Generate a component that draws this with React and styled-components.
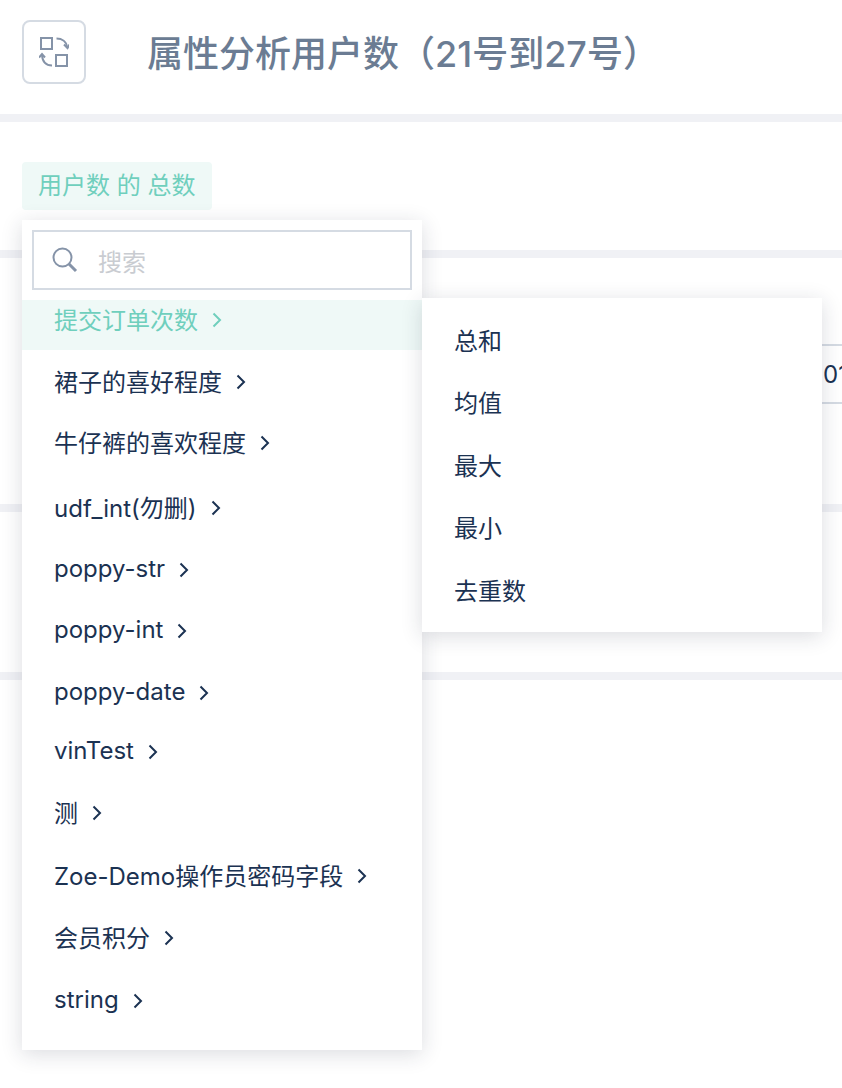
import React from "react";
import styled, { createGlobalStyle } from "styled-components";

const GlobalStyle = createGlobalStyle`
	html, body {
		margin: 0;
		padding: 0;
		background: #fff;
	}
	body {
		font-family: Inter, "Noto Sans CJK SC", sans-serif;
		overflow: hidden;
	}
	* {
		box-sizing: border-box;
	}
`;

const Page = styled.div`
	position: relative;
	width: 842px;
	height: 1088px;
	overflow: hidden;
`;
const Header = styled.header`
	display: flex;
	align-items: center;
	height: 114px;
	padding: 0 0 10px 22px;
	gap: 61px;
`;
const IconButton = styled.button`
	display: flex;
	align-items: center;
	justify-content: center;
	width: 64px;
	height: 64px;
	padding: 0;
	background: #fff;
	border: 2px solid #d5dbe3;
	border-radius: 8px;
`;
const Title = styled.h1`
	margin: 0;
	padding: 0 0 3px;
	font-size: 36px;
	font-weight: 500;
	color: #6b7c93;
	white-space: nowrap;
`;
const Section = styled.section`
	height: ${(p) => p.$height}px;
	padding: ${(p) => p.$padding || "0"};
	border-top: 8px solid #f0f1f5;
`;
const MetricTag = styled.div`
	display: inline-flex;
	align-items: center;
	height: 48px;
	padding: 0 16px 5px;
	font-size: 24px;
	color: #6fcfbd;
	background: #eff9f7;
	border-radius: 4px;
`;
const DataTable = styled.div`
	display: flex;
	align-items: center;
	height: 60px;
	margin: 86px 0 0 822px;
	padding-left: 1px;
	width: 20px;
	overflow: hidden;
	font-size: 24px;
	color: #1b3252;
	white-space: nowrap;
	border-top: 2px solid #d5dbe3;
	border-bottom: 2px solid #d5dbe3;
`;
const Menu = styled.div`
	position: absolute;
	background: #fff;
	box-shadow: 0 4px 20px rgba(30, 40, 60, 0.16);
`;
const AttributeMenu = styled(Menu)`
	left: 22px;
	top: 220px;
	width: 400px;
	height: 830px;
	padding-top: 10px;
`;
const AggregateMenu = styled(Menu)`
	left: 422px;
	top: 298px;
	width: 400px;
	height: 334px;
	padding-top: 10px;
`;
const SearchBox = styled.div`
	display: flex;
	align-items: center;
	gap: 20px;
	height: 60px;
	margin: 0 10px;
	padding: 0 18px;
	border: 2px solid #d5dbe3;
`;
const SearchPlaceholder = styled.span`
	font-size: 24px;
	color: #c9ccd1;
`;
const AttributeList = styled.ul`
	margin: 10px 0 0;
	padding: 0;
	list-style: none;
`;
const AttributeRow = styled.li`
	display: flex;
	align-items: center;
	gap: 14px;
	height: 50px;
	margin-top: ${(p) => p.$gap}px;
	padding: ${(p) => (p.$active ? "0 0 10px 32px" : "0 0 0 32px")};
	font-size: 24px;
	color: ${(p) => (p.$active ? "#6fcfbd" : "#1b3252")};
	background: ${(p) => (p.$active ? "#eff9f7" : "transparent")};
	white-space: nowrap;
`;
const RowLabel = styled.span`
	padding-bottom: 3px;
`;
const AggregateRow = styled.div`
	display: flex;
	align-items: center;
	height: 62.5px;
	padding-left: 32px;
	font-size: 24px;
	color: #1b3252;
`;

const SwapIcon = () => (
	<svg width="30" height="32" viewBox="0 0 30 32" fill="none" stroke="#8593a8" strokeWidth="2">
		<rect x="2" y="2" width="11" height="11" />
		<rect x="17" y="19" width="11" height="11" />
		<path d="M17.500 2.500C23 2.500 27.500 5.500 28 11" />
		<path d="M25 8.500l3.500 3.500 2-3.500" />
		<path d="M13 29.500C7.500 29.500 3.500 26 3 19" />
		<path d="M0 21.500l3-3.500 3 3.500" />
	</svg>
);

const SearchIcon = () => (
	<svg width="26" height="26" viewBox="0 0 26 26" fill="none" stroke="#8593a8" strokeWidth="2">
		<circle cx="10.500" cy="10.500" r="9" />
		<path d="M17 17l7 7" strokeWidth="3" />
	</svg>
);

const Chevron = ({ color }) => (
	<svg width="10" height="16" viewBox="0 0 10 16" fill="none" stroke={color} strokeWidth="2">
		<path d="M1.500 1.500L8 8l-6.500 6.500" />
	</svg>
);

const attributes = [
	{ label: "提交订单次数", gap: 0, active: true },
	{ label: "裙子的喜好程度", gap: 7 },
	{ label: "牛仔裤的喜欢程度", gap: 11 },
	{ label: "udf_int(勿删)", gap: 15 },
	{ label: "poppy-str", gap: 12 },
	{ label: "poppy-int", gap: 11 },
	{ label: "poppy-date", gap: 12 },
	{ label: "vinTest", gap: 9 },
	{ label: "测", gap: 11 },
	{ label: "Zoe-Demo操作员密码字段", gap: 13 },
	{ label: "会员积分", gap: 12 },
	{ label: "string", gap: 13 },
];

const aggregates = ["总和", "均值", "最大", "最小", "去重数"];

export default function App() {
	return (
		<Page>
			<GlobalStyle />
			<Header>
				<IconButton>
					<SwapIcon />
				</IconButton>
				<Title>属性分析用户数（21号到27号）</Title>
			</Header>
			<Section $height={136} $padding="40px 0 0 22px">
				<MetricTag>用户数 的 总数</MetricTag>
			</Section>
			<Section $height={254}>
				<DataTable>01</DataTable>
			</Section>
			<Section $height={168} />
			<Section $height={416} />
			<AttributeMenu>
				<SearchBox>
					<SearchIcon />
					<SearchPlaceholder>搜索</SearchPlaceholder>
				</SearchBox>
				<AttributeList>
					{attributes.map((item) => (
						<AttributeRow key={item.label} $gap={item.gap} $active={item.active}>
							<RowLabel>{item.label}</RowLabel>
							<Chevron color={item.active ? "#6fcfbd" : "#1b3252"} />
						</AttributeRow>
					))}
				</AttributeList>
			</AttributeMenu>
			<AggregateMenu>
				{aggregates.map((item) => (
					<AggregateRow key={item}>{item}</AggregateRow>
				))}
			</AggregateMenu>
		</Page>
	);
}
